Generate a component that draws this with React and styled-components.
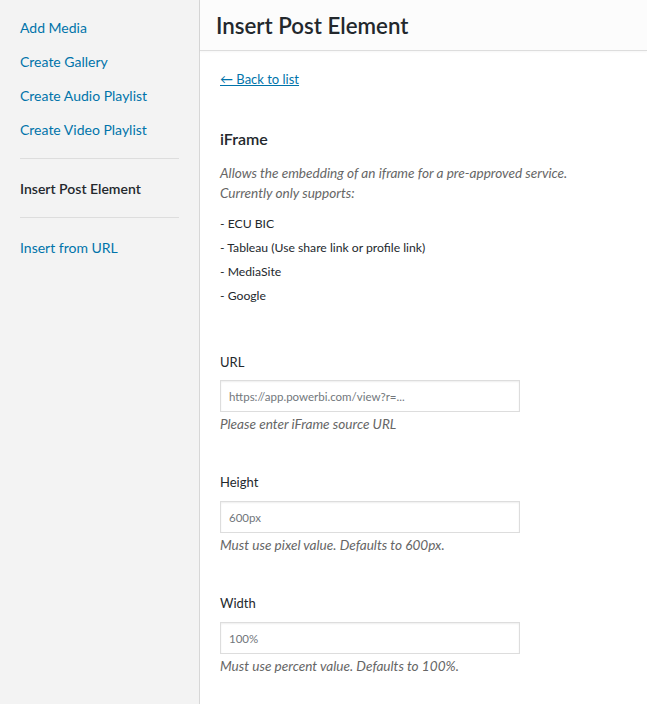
import styled, { createGlobalStyle } from "styled-components";

const GlobalStyle = createGlobalStyle`
  html, body { margin: 0; padding: 0; }
  body {
    font-family: "Segoe UI", Lato, "Open Sans", sans-serif;
    color: #23282d;
    background: #fff;
  }
`;

const Frame = styled.div`
  display: flex;
  width: 647px;
  height: 704px;
  overflow: hidden;
`;

const Menu = styled.nav`
  width: 200px;
  flex-shrink: 0;
  background: #f3f3f3;
  border-right: 1px solid #d7d7d7;
  padding: 10px 0;
  box-sizing: border-box;
`;

const MenuItem = styled.a`
  display: block;
  padding: 9px 20px 7px;
  font-size: 14px;
  line-height: 18px;
  color: ${(p) => (p.active ? "#23282d" : "#0073aa")};
  font-weight: ${(p) => (p.active ? 600 : 400)};
  text-decoration: none;
`;

const Separator = styled.div`
  height: 0;
  margin: 12px 20px;
  border-top: 1px solid #ddd;
`;

const Main = styled.div`
  flex: 1;
  display: flex;
  flex-direction: column;
  min-width: 0;
`;

const TitleBar = styled.div`
  height: 50px;
  background: #fcfcfc;
  border-bottom: 1px solid #ddd;
  box-shadow: 0 1px 2px rgba(0, 0, 0, 0.04);
  flex-shrink: 0;
  h1 {
    margin: 0;
    padding: 0 16px;
    font-size: 22.3px;
    line-height: 52px;
    font-weight: 600;
    color: #23282d;
  }
`;

const Content = styled.div`
  padding: 17px 20px 0;
`;

const BackLink = styled.a`
  display: inline-block;
  font-size: 13px;
  line-height: 20px;
  color: #0073aa;
  text-decoration: underline;
`;

const Heading = styled.h2`
  margin: 39px 0 0;
  font-size: 16px;
  line-height: 22px;
  font-weight: 600;
  color: #23282d;
`;

const Description = styled.p`
  margin: 13px 0 0;
  font-size: 13.6px;
  line-height: 20px;
  font-style: italic;
  color: #666;
`;

const Services = styled.ul`
  list-style: none;
  margin: 9px 0 0;
  padding: 0;
  li {
    font-size: 12.2px;
    line-height: 24px;
    color: #23282d;
  }
`;

const Field = styled.div`
  margin-top: ${(p) => p.gap}px;
`;

const Label = styled.label`
  display: block;
  font-size: 13px;
  line-height: 20px;
  color: #23282d;
`;

const Input = styled.input`
  display: block;
  margin-top: ${(p) => p.offset}px;
  width: 300px;
  height: 32px;
  box-sizing: border-box;
  padding: 0 8px;
  border: 1px solid #ddd;
  box-shadow: inset 0 1px 2px rgba(0, 0, 0, 0.07);
  font-family: inherit;
  font-size: 11.5px;
  color: #32373c;
  outline: none;
  &::placeholder {
    color: #72777c;
  }
`;

const Help = styled.p`
  margin: 2px 0 0;
  font-size: 13.6px;
  line-height: 20px;
  font-style: italic;
  color: #666;
`;

const menu = [
  { label: "Add Media" },
  { label: "Create Gallery" },
  { label: "Create Audio Playlist" },
  { label: "Create Video Playlist" },
  { sep: true },
  { label: "Insert Post Element", active: true },
  { sep: true },
  { label: "Insert from URL" },
];

const fields = [
  { label: "URL", placeholder: "https://app.powerbi.com/view?r=...", help: "Please enter iFrame source URL", gap: 44, offset: 8 },
  { label: "Height", placeholder: "600px", help: "Must use pixel value. Defaults to 600px.", gap: 38, offset: 9 },
  { label: "Width", placeholder: "100%", help: "Must use percent value. Defaults to 100%.", gap: 38, offset: 9 },
];

export default function App() {
  return (
    <>
      <GlobalStyle />
      <Frame>
        <Menu>
          {menu.map((item, i) =>
            item.sep ? (
              <Separator key={i} />
            ) : (
              <MenuItem key={i} href="#" active={item.active ? 1 : 0}>
                {item.label}
              </MenuItem>
            )
          )}
        </Menu>
        <Main>
          <TitleBar>
            <h1>Insert Post Element</h1>
          </TitleBar>
          <Content>
            <BackLink href="#">← Back to list</BackLink>
            <Heading>iFrame</Heading>
            <Description>
              Allows the embedding of an iframe for a pre-approved service.
              <br />
              Currently only supports:
            </Description>
            <Services>
              <li>- ECU BIC</li>
              <li>- Tableau (Use share link or profile link)</li>
              <li>- MediaSite</li>
              <li>- Google</li>
            </Services>
            {fields.map((f) => (
              <Field key={f.label} gap={f.gap}>
                <Label>{f.label}</Label>
                <Input placeholder={f.placeholder} offset={f.offset} />
                <Help>{f.help}</Help>
              </Field>
            ))}
          </Content>
        </Main>
      </Frame>
    </>
  );
}
